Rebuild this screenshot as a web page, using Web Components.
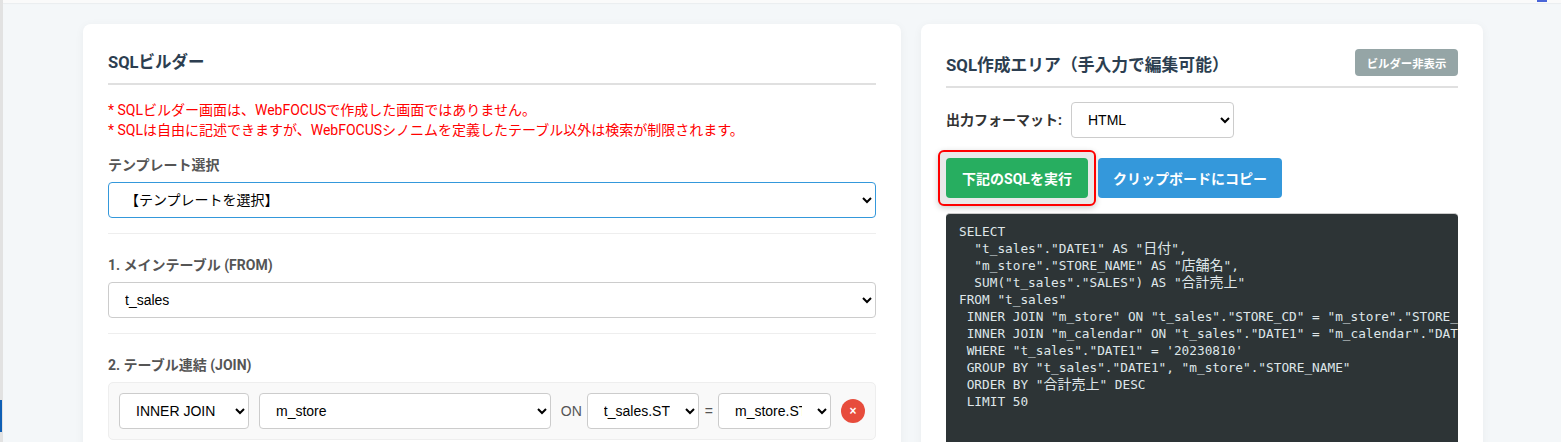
<!DOCTYPE html>
<html lang="ja">
<head>
<meta charset="utf-8">
<title>SQLビルダー</title>
<style>
  html, body { margin: 0; height: 100%; overflow: hidden; }
  body {
    background: #f4f7f9;
    color: #333;
    font-family: Roboto, "Noto Sans CJK JP", sans-serif;
    font-size: 14px;
  }
</style>
</head>
<body>
<sb-app>
  <sb-card>
    <sb-heading>SQLビルダー</sb-heading>
    <sb-note>
      <div>* SQLビルダー画面は、WebFOCUSで作成した画面ではありません。</div>
      <div>* SQLは自由に記述できますが、WebFOCUSシノニムを定義したテーブル以外は検索が制限されます。</div>
    </sb-note>
    <sb-section label="テンプレート選択">
      <sb-select value="【テンプレートを選択】" focused></sb-select>
    </sb-section>
    <sb-section label="1. メインテーブル (FROM)">
      <sb-select value="t_sales"></sb-select>
    </sb-section>
    <sb-section label="2. テーブル連結 (JOIN)" last>
      <sb-join-row></sb-join-row>
    </sb-section>
  </sb-card>
  <sb-card>
    <sb-heading with-action>
      SQL作成エリア（手入力で編集可能）
      <sb-button slot="action" variant="muted">ビルダー非表示</sb-button>
    </sb-heading>
    <sb-format-row></sb-format-row>
    <sb-actions>
      <sb-button variant="run">下記のSQLを実行</sb-button>
      <sb-button variant="copy">クリップボードにコピー</sb-button>
    </sb-actions>
    <sb-code></sb-code>
  </sb-card>
</sb-app>

<script>
const FIELD_FONT = '"Liberation Sans", "Noto Sans CJK JP", sans-serif';

class SbApp extends HTMLElement {
  connectedCallback() {
    this.attachShadow({ mode: 'open' });
    this.shadowRoot.innerHTML = `
      <style>
        :host { display: block; height: 442px; box-sizing: border-box; border-left: 3px solid #e2e2e2; position: relative; }
        .top { height: 3px; background: #fafafa; box-shadow: 0 1px 1px rgba(0,0,0,.04); }
        .grid {
          display: grid;
          grid-template-columns: 818px 562px;
          gap: 20px;
          padding: 21px 0 0 80px;
        }
        /* bits of the window behind, they sit on the very edge of the shot */
        .edge-left { position: absolute; left: -3px; top: 400px; width: 2px; height: 32px; background: #0f5fb5; }
        .edge-top { position: absolute; left: 1534px; top: 0; width: 10px; height: 2px; background: #4a66d8; }
      </style>
      <div class="top"></div>
      <div class="grid"><slot></slot></div>
      <div class="edge-left"></div>
      <div class="edge-top"></div>
    `;
  }
}

class SbCard extends HTMLElement {
  connectedCallback() {
    this.attachShadow({ mode: 'open' });
    this.shadowRoot.innerHTML = `
      <style>
        :host {
          display: block;
          background: #fff;
          border-radius: 8px;
          padding: 25px;
          box-shadow: 0 2px 10px rgba(0,0,0,.05);
          min-height: 600px;
          min-width: 0;
        }
      </style>
      <slot></slot>
    `;
  }
}

class SbHeading extends HTMLElement {
  connectedCallback() {
    this.attachShadow({ mode: 'open' });
    this.shadowRoot.innerHTML = `
      <style>
        :host {
          display: flex;
          justify-content: space-between;
          align-items: center;
          border-bottom: 2px solid #e0e0e0;
          padding-bottom: 10px;
          margin-bottom: 14px;
          color: #2c3e50;
          font-size: 16.5px;
          font-weight: 700;
          line-height: 20px;
        }
        .t { padding-top: 4px; }
        :host([with-action]) { font-size: 16.8px; }
        :host([with-action]) .t { padding-top: 5px; }
      </style>
      <span class="t"><slot></slot></span>
      <slot name="action"></slot>
    `;
  }
}

class SbNote extends HTMLElement {
  connectedCallback() {
    this.attachShadow({ mode: 'open' });
    this.shadowRoot.innerHTML = `
      <style>
        :host { display: block; color: #f00; font-size: 14px; line-height: 20px; margin: 15px 0 15px; }
      </style>
      <slot></slot>
    `;
  }
}

class SbSection extends HTMLElement {
  connectedCallback() {
    this.attachShadow({ mode: 'open' });
    this.shadowRoot.innerHTML = `
      <style>
        :host { display: block; padding-bottom: 15px; border-bottom: 1px solid #eee; margin-bottom: 21px; }
        :host([last]) { border-bottom: 0; }
        label { display: block; color: #555; font-weight: 700; font-size: 14px; line-height: 20px; margin-bottom: 7px; }
      </style>
      <label></label>
      <slot></slot>
    `;
    this.shadowRoot.querySelector('label').textContent = this.getAttribute('label');
  }
}

class SbSelect extends HTMLElement {
  connectedCallback() {
    this.attachShadow({ mode: 'open' });
    this.shadowRoot.innerHTML = `
      <style>
        :host { display: block; min-width: 0; }
        select {
          display: block;
          width: 100%;
          height: 36px;
          box-sizing: border-box;
          padding: 8px 12px;
          border: 1px solid #ccc;
          border-radius: 4px;
          background-color: #fff;
          color: #000;
          font-family: ${FIELD_FONT};
          font-size: 14px;
        }
        :host([focused]) select { border-color: #3498db; }
      </style>
      <select><option></option></select>
    `;
    this.shadowRoot.querySelector('option').textContent = this.getAttribute('value');
  }
}

class SbJoinRow extends HTMLElement {
  connectedCallback() {
    this.attachShadow({ mode: 'open' });
    this.shadowRoot.innerHTML = `
      <style>
        :host {
          display: flex;
          align-items: center;
          gap: 10px;
          padding: 10px;
          background: #f9f9f9;
          border: 1px solid #eee;
          border-radius: 5px;
          font-family: ${FIELD_FONT};
          font-size: 14px;
          color: #555;
        }
        .type { width: 130px; flex: none; }
        .table { flex: 1; }
        .on { display: flex; align-items: center; gap: 5px; flex: none; }
        .left { width: 112px; }
        .right { width: 113px; }
        .eq { padding-left: 1px; }
        button {
          flex: none;
          width: 24px;
          height: 24px;
          padding: 0;
          border: 0;
          border-radius: 50%;
          background: #e74c3c;
          color: #fff;
          font: 700 12px/24px ${FIELD_FONT};
        }
      </style>
      <sb-select class="type" value="INNER JOIN"></sb-select>
      <sb-select class="table" value="m_store"></sb-select>
      <div class="on">
        <span>ON</span>
        <sb-select class="left" value="t_sales.STORE_CD"></sb-select>
        <span class="eq">=</span>
        <sb-select class="right" value="m_store.STORE_CD"></sb-select>
      </div>
      <button>×</button>
    `;
  }
}

class SbFormatRow extends HTMLElement {
  connectedCallback() {
    this.attachShadow({ mode: 'open' });
    this.shadowRoot.innerHTML = `
      <style>
        :host { display: flex; align-items: center; margin-bottom: 20px; }
        span { width: 125px; padding-bottom: 2px; color: #333; font-weight: 700; font-size: 14px; }
        sb-select { width: 163px; }
      </style>
      <span>出力フォーマット:</span>
      <sb-select value="HTML"></sb-select>
    `;
  }
}

class SbActions extends HTMLElement {
  connectedCallback() {
    this.attachShadow({ mode: 'open' });
    this.shadowRoot.innerHTML = `
      <style>
        :host { display: flex; gap: 10px; margin-bottom: 15px; }
      </style>
      <slot></slot>
    `;
  }
}

class SbButton extends HTMLElement {
  connectedCallback() {
    this.attachShadow({ mode: 'open' });
    this.shadowRoot.innerHTML = `
      <style>
        :host { display: block; flex: none; position: relative; }
        button {
          display: block;
          position: relative;
          height: 40px;
          padding: 0;
          border: 0;
          border-radius: 4px;
          color: #fff;
          font-family: Roboto, "Noto Sans CJK JP", sans-serif;
          font-size: 14px;
          font-weight: 700;
        }
        /* the red ring marked on the run button */
        :host([variant=run])::before {
          content: "";
          position: absolute;
          inset: -8px;
          border: 2px solid #f00;
          border-radius: 6px;
          background: #e9e9e9;
          box-shadow: 0 2px 6px rgba(0,0,0,.2);
        }
        :host([variant=run]) button { background: #27ae60; width: 142px; }
        :host([variant=copy]) button { background: #3498db; width: 184px; }
        :host([variant=muted]) button { background: #95a5a6; width: 103px; height: 27px; font-size: 11.4px; }
      </style>
      <button><slot></slot></button>
    `;
  }
}

class SbCode extends HTMLElement {
  connectedCallback() {
    this.attachShadow({ mode: 'open' });
    const sql = [
      'SELECT',
      '  "t_sales"."DATE1" AS "日付",',
      '  "m_store"."STORE_NAME" AS "店舗名",',
      '  SUM("t_sales"."SALES") AS "合計売上"',
      'FROM "t_sales"',
      ' INNER JOIN "m_store" ON "t_sales"."STORE_CD" = "m_store"."STORE_CD"',
      ' INNER JOIN "m_calendar" ON "t_sales"."DATE1" = "m_calendar"."DATE1"',
      ' WHERE "t_sales"."DATE1" = \'20230810\'',
      ' GROUP BY "t_sales"."DATE1", "m_store"."STORE_NAME"',
      ' ORDER BY "合計売上" DESC',
      ' LIMIT 50'
    ].join('\n').replace(/[\u3000-\u9fff]+/g, m => `<b>${m}</b>`);
    this.shadowRoot.innerHTML = `
      <style>
        :host { display: block; }
        pre {
          margin: 0;
          height: 300px;
          box-sizing: border-box;
          padding: 9px 12px 9px 13px;
          overflow: hidden;
          background: #2d3436;
          border: 1px solid #ccc;
          border-width: 1px 0 0;
          border-radius: 4px;
          color: #dfe6e9;
          font-family: "DejaVu Sans Mono", "Noto Sans CJK JP", monospace;
          font-size: 12.75px;
          line-height: 17px;
        }
        b { font-family: "Noto Sans CJK JP", sans-serif; font-weight: 400; font-size: 14px; line-height: 1; }
      </style>
      <pre>${sql}</pre>
    `;
  }
}

customElements.define('sb-app', SbApp);
customElements.define('sb-card', SbCard);
customElements.define('sb-heading', SbHeading);
customElements.define('sb-note', SbNote);
customElements.define('sb-section', SbSection);
customElements.define('sb-select', SbSelect);
customElements.define('sb-join-row', SbJoinRow);
customElements.define('sb-format-row', SbFormatRow);
customElements.define('sb-actions', SbActions);
customElements.define('sb-button', SbButton);
customElements.define('sb-code', SbCode);
</script>
</body>
</html>
